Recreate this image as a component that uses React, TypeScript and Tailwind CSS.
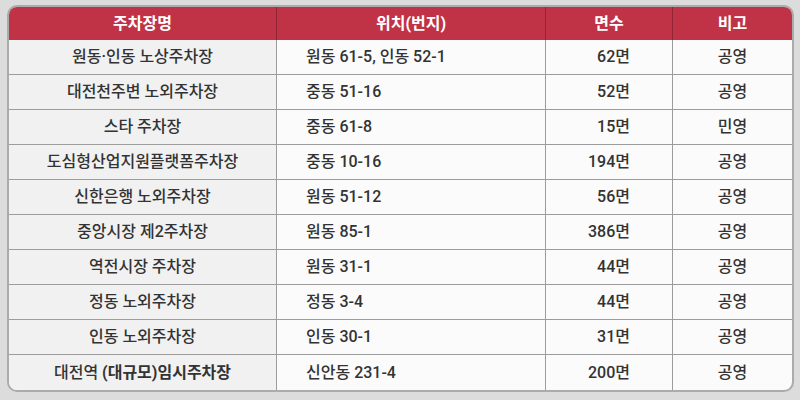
import React from "react";

type Row = { name: React.ReactNode; loc: string; cnt: string; note: string };

const rows: Row[] = [
  { name: "원동·인동 노상주차장", loc: "원동 61-5, 인동 52-1", cnt: "62면", note: "공영" },
  { name: "대전천주변 노외주차장", loc: "중동 51-16", cnt: "52면", note: "공영" },
  { name: "스타 주차장", loc: "중동 61-8", cnt: "15면", note: "민영" },
  { name: "도심형산업지원플랫폼주차장", loc: "중동 10-16", cnt: "194면", note: "공영" },
  { name: "신한은행 노외주차장", loc: "원동 51-12", cnt: "56면", note: "공영" },
  { name: "중앙시장 제2주차장", loc: "원동 85-1", cnt: "386면", note: "공영" },
  { name: "역전시장 주차장", loc: "원동 31-1", cnt: "44면", note: "공영" },
  { name: "정동 노외주차장", loc: "정동 3-4", cnt: "44면", note: "공영" },
  { name: "인동 노외주차장", loc: "인동 30-1", cnt: "31면", note: "공영" },
  {
    name: (
      <span>
        대전역 <span className="font-bold">(대규모)임시주차장</span>
      </span>
    ),
    loc: "신안동 231-4",
    cnt: "200면",
    note: "공영",
  },
];

export default function App() {
  return (
    <div
      className="w-[800px] h-[400px] bg-[#dcdcdc] pt-[5px] pl-[7px] overflow-hidden"
      style={{ fontFamily: 'Roboto, "Noto Sans CJK KR", "Noto Sans", sans-serif' }}
    >
      <div className="w-[787px] h-[387px] border-2 border-[#ababab] rounded-[10px] overflow-hidden bg-[#fbfbfb]">
        <div className="grid grid-cols-[268px_269px_127px_119px] h-[33px] bg-[#c03347] text-white text-[16px] font-bold">
          <div className="flex items-center justify-center border-r border-[#8f2535]">주차장명</div>
          <div className="flex items-center justify-center border-r border-[#8f2535]">위치(번지)</div>
          <div className="flex items-center justify-center border-r border-[#8f2535]">면수</div>
          <div className="flex items-center justify-center">비고</div>
        </div>
        {rows.map((r, i) => (
          <div
            key={i}
            className={`grid grid-cols-[268px_269px_127px_119px] h-[35px] text-[16px] font-medium text-[#333333] ${
              i < rows.length - 1 ? "border-b border-[#9c9c9c]" : ""
            }`}
          >
            <div className="flex items-center justify-center bg-[#f1f1f1] border-r border-[#9c9c9c]">
              {r.name}
            </div>
            <div className="flex items-center pl-[29px] border-r border-[#9c9c9c]">{r.loc}</div>
            <div className="flex items-center justify-end pr-[42px] border-r border-[#9c9c9c]">{r.cnt}</div>
            <div className="flex items-center justify-center">{r.note}</div>
          </div>
        ))}
      </div>
    </div>
  );
}
